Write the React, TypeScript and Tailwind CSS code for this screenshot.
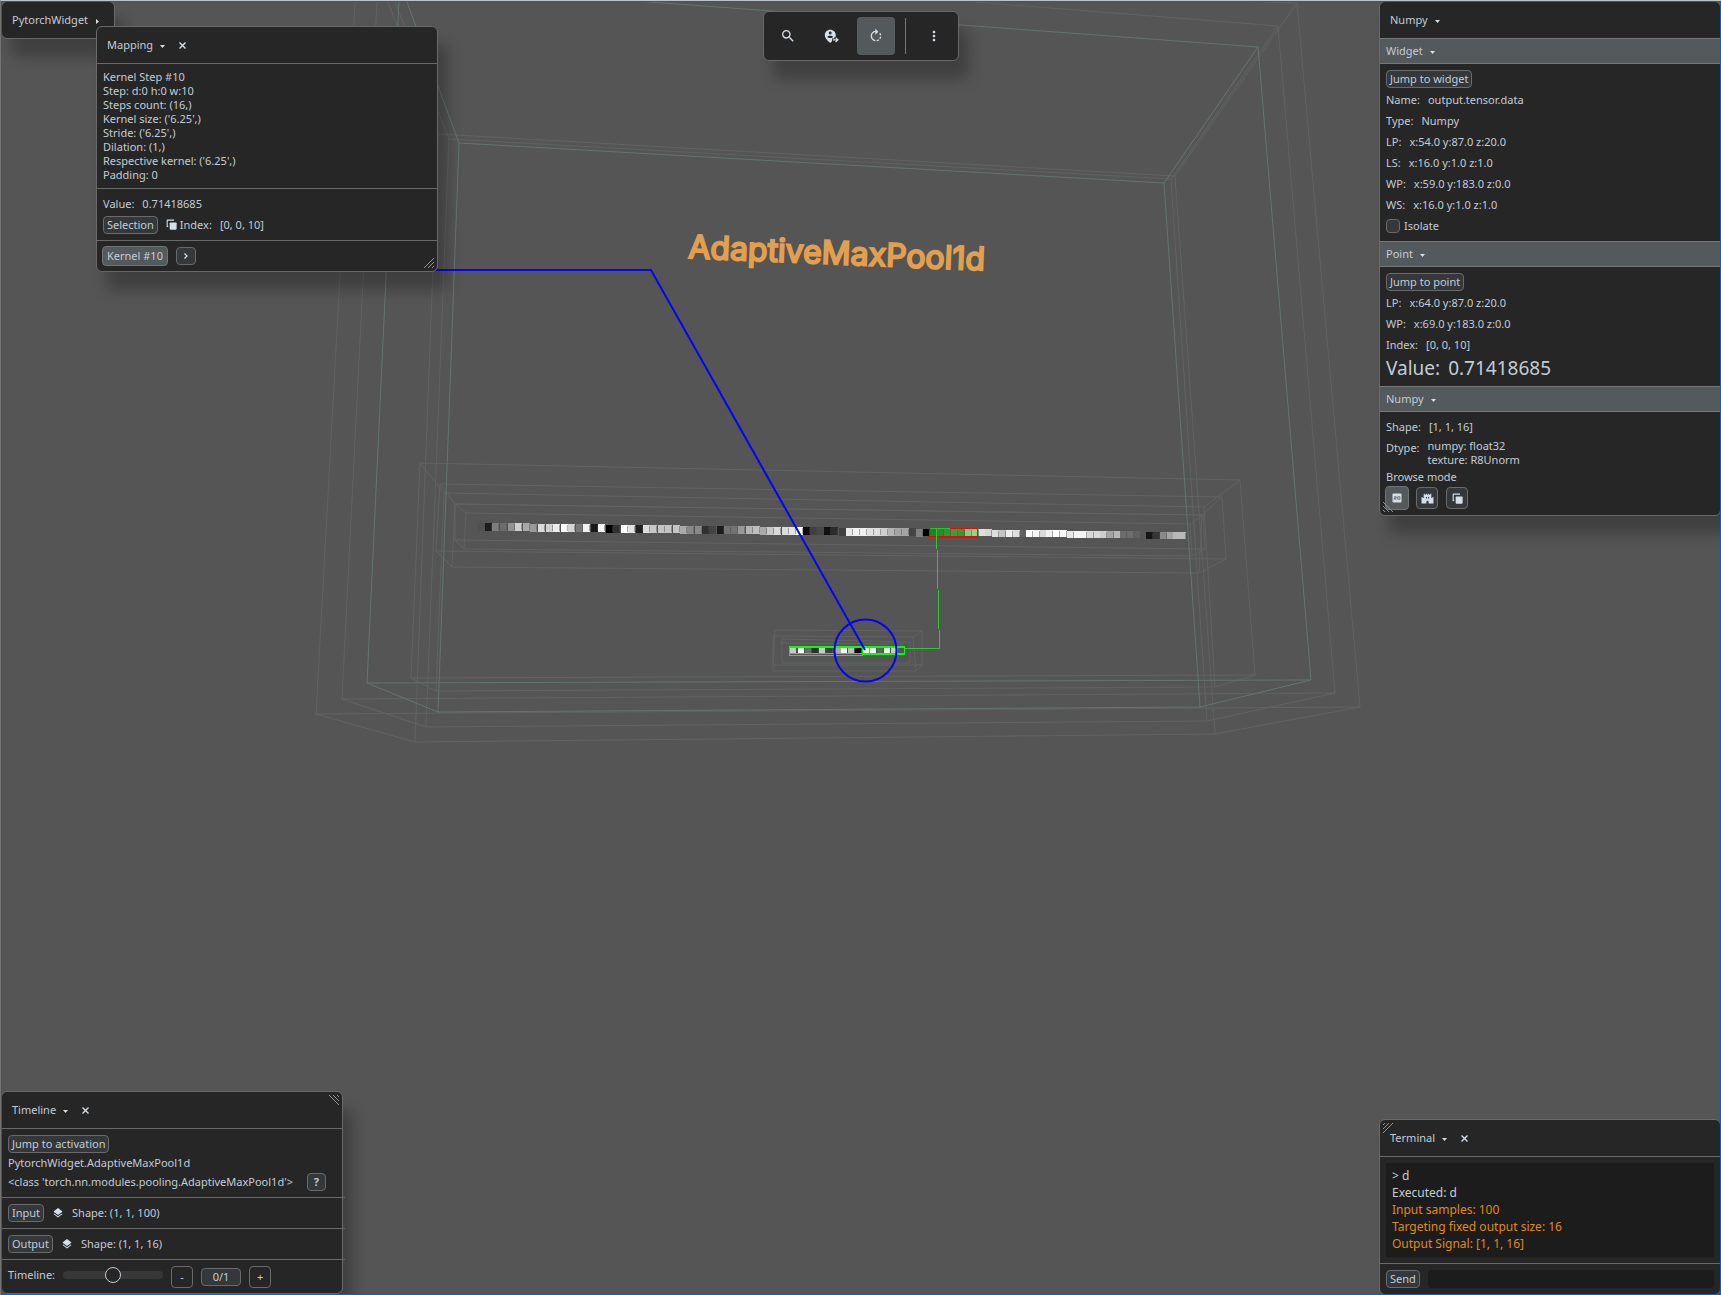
import React from "react";
import { MdCastle, MdLayers, MdMoreVert, MdRotateRight, MdSearch } from "react-icons/md";

type Cell = [number, string];

const inputCells: Cell[] = [
  [478, "#515151"], [485, "#1c1c1c"], [492, "#7d7d7d"], [500, "#6c6c6c"], [508, "#919191"], [515, "#cecece"],
  [523, "#a7a7a7"], [530, "#999999"], [538, "#dadada"], [546, "#d0d0d0"], [553, "#ebebeb"], [561, "#ffffff"],
  [568, "#d5d5d5"], [576, "#777777"], [583, "#f0f0f0"], [591, "#191919"], [598, "#f4f4f4"], [606, "#000000"],
  [613, "#303030"], [621, "#ffffff"], [628, "#e2e2e2"], [636, "#202020"], [643, "#dcdcdc"], [650, "#c8c8c8"],
  [658, "#c4c4c4"], [665, "#c4c4c4"], [673, "#c4c4c4"], [680, "#a9a9a9"], [687, "#888888"], [695, "#888888"],
  [702, "#303030"], [709, "#444444"], [717, "#1b1b1b"], [724, "#727272"], [731, "#727272"], [738, "#979797"],
  [746, "#b4b4b4"], [753, "#bfbfbf"], [760, "#a9a9a9"], [767, "#c8c8c8"], [774, "#dadada"], [782, "#dcdcdc"],
  [789, "#e4e4e4"], [796, "#ffffff"], [803, "#0e0e0e"], [810, "#404040"], [817, "#484848"], [824, "#111111"],
  [831, "#2c2c2c"], [839, "#404040"], [846, "#eaeaea"], [853, "#f3f3f3"], [860, "#efefef"], [867, "#e0e0e0"],
  [874, "#dedede"], [881, "#cfcfcf"], [888, "#b5b5b5"], [895, "#a5a5a5"], [902, "#a5a5a5"], [909, "#444444"],
  [916, "#808080"], [923, "#000000"], [930, "#1c8420"], [937, "#22902a"], [944, "#2a9a30"], [951, "#34a03a"],
  [958, "#2e9c34"], [965, "#7fd082"], [972, "#8ad88c"], [979, "#dfdfdf"], [985, "#d6d6d6"], [992, "#dedede"],
  [999, "#c4c4c4"], [1006, "#eeeeee"], [1013, "#dddddd"], [1020, "#626262"], [1026, "#ffffff"], [1033, "#f6f6f6"],
  [1040, "#dadada"], [1046, "#f1f1f1"], [1053, "#ffffff"], [1060, "#f8f8f8"], [1067, "#e6e6e6"], [1074, "#f3f3f3"],
  [1080, "#f3f3f3"], [1087, "#d8d8d8"], [1094, "#dadada"], [1100, "#cdcdcd"], [1107, "#a3a3a3"], [1114, "#b7b7b7"],
  [1120, "#6d6d6d"], [1127, "#6d6d6d"], [1134, "#606060"], [1140, "#565656"], [1146, "#151515"], [1153, "#353535"],
  [1160, "#8a8a8a"], [1167, "#a2a2a2"], [1173, "#b8b8b8"], [1179, "#b8b8b8"],
];

const outputCells: Cell[] = [
  [790, "#c8c8c8"], [798, "#ffffff"], [805, "#6b6b6b"], [812, "#303030"], [819, "#c8c8c8"], [826, "#404040"],
  [835, "#aaaaaa"], [841, "#f3f3f3"], [848, "#bdbdbd"], [855, "#000000"], [863, "#eeeeee"], [870, "#f3f3f3"],
  [877, "#606060"], [884, "#f0f0f0"], [891, "#cccccc"], [898, "#555555"],
];

const cellTop = (x: number) => Math.round(523 + ((x - 485) * 9) / 695);
const cellHeight = (x: number) => (x < 920 ? 8 : 7);

function Scene() {
  return (
    <svg
      className="absolute inset-0 h-full w-full"
      viewBox="0 0 1721 1295"
      preserveAspectRatio="xMinYMin slice"
      aria-label="AdaptiveMaxPool1d scene"
    >
      <g fill="none" stroke="#616262" strokeWidth="1">
        <path d="M355 2 L316 714 L1360 707 L1297 3 L1200 0 M316 714 L415 742 L1215 734 L1360 707 M1297 3 L1175 176 L438 134 L388 2 M438 134 L415 742 M1175 176 L1215 734" />
        <path d="M377 2 L342 699 L1335 693 L1278 26 L975 2 M342 699 L426 727 L1207 721 L1335 693 M1278 26 L1171 179 L449 139 L395 2 M449 139 L426 727 M1171 179 L1207 721" />
        <path d="M420 463 L1240 480 L1255 675 L411 678 Z M436 691 L1215 687 L1204 507 L444 493 Z M420 463 L444 493 M1240 480 L1204 507 M1255 675 L1215 687 M411 678 L436 691" />
        <path d="M440 484 L1222 497 L1226 559 L436 551 Z M455 504 L1202 515 L1199 573 L452 567 Z M440 484 L455 504 M1222 497 L1202 515 M1226 559 L1199 573 M436 551 L452 567" />
        <path d="M455 504 L1203 515 L1205 549 L455 540 Z M466 513 L1190 524 L1192 556 L464 549 Z M455 504 L466 513 M1203 515 L1190 524 M1205 549 L1192 556 M455 540 L464 549" />
        <path d="M775 630 L922 631 L922 665 L773 665 Z M773 636 L913 637 L916 671 L773 671 Z M922 631 L913 637 M922 665 L916 671 M782 639 L910 642 L910 663 L782 663 Z M780 643 L906 644" />
      </g>
      <g fill="none" stroke="#64756d" strokeWidth="1">
        <path d="M399 0 L367 683 L1311 680 L1258 47 L637 1" />
        <path d="M459 143 L1164 183 L1200 707 L438 712 Z" />
        <path d="M407 2 L459 143 M1258 47 L1164 183 M1311 680 L1200 707 M367 683 L438 712" />
      </g>

      <text
        x="688"
        y="258"
        transform="rotate(2.4 688 258)"
        fill="#e2a04f"
        stroke="#e2a04f"
        strokeWidth="2"
        fontSize="32"
        fontFamily="Inter, sans-serif"
      >
        AdaptiveMaxPool1d
      </text>

      <g shapeRendering="crispEdges">
        {inputCells.map(([x, color]) => (
          <g key={x}>
            <rect x={x} y={cellTop(x)} width="7" height={cellHeight(x)} fill={color} />
            <path d={`M${x + 6.5} ${cellTop(x) + 1}v6`} stroke="#4c4c4c" strokeOpacity="0.45" />
          </g>
        ))}
        <path d="M929.5 535.5 V528.5 H977.5 V537.5 H938.5 M928 536.5 H977" fill="none" stroke="#ff0000" />
        <path d="M930 528.5 H950" stroke="#2cc030" />
      </g>
      <path d="M936.5 529 L939.5 648.5 H905" fill="none" stroke="#34c434" shapeRendering="crispEdges" />

      <g shapeRendering="crispEdges">
        <rect x="790" y="648" width="108" height="5" fill="#4d4d4d" />
        {outputCells.map(([x, color]) => (
          <rect key={x} x={x} y="648" width="6" height="5" fill={color} />
        ))}
        <path d="M789 647 H905 M863 654 H905" stroke="#00ff00" strokeWidth="2" />
        <path d="M789.5 646 V656 M904.5 646 V655 M789 653.5 H863 M789 655.5 H863 M897.5 647 V654" stroke="#00ff00" />
        <path d="M862.5 646 V655 M869.5 646 V655" stroke="#00ff00" />
      </g>

      <path d="M436 270 H651 L865 650" fill="none" stroke="#0505f4" strokeWidth="2" />
      <circle cx="865.5" cy="650.5" r="31" fill="none" stroke="#0505f4" strokeWidth="2" />
    </svg>
  );
}

function Caret({ side = false }: { side?: boolean }) {
  return (
    <svg width="5" height="5" viewBox="0 0 5 5" className="mt-0.5 shrink-0 fill-[#d5dfea]" aria-hidden="true">
      <path d={side ? "M1 0 L4 2.5 L1 5Z" : "M0 1 H5 L2.5 4Z"} />
    </svg>
  );
}

function CopyIcon({ size }: { size: number }) {
  return (
    <svg width={size} height={size} viewBox="0 0 12 12" aria-hidden="true" className="shrink-0">
      <path d="M1.5 8.5 H1.3 V1.7 Q1.3 1.2 1.8 1.2 H8.2 V2" fill="none" stroke="#d5dfea" strokeWidth="1.2" />
      <path d="M1 8 H2.4" stroke="#d5dfea" strokeWidth="1.2" />
      <rect x="4" y="3.8" width="7.6" height="7.8" rx="0.9" fill="#d5dfea" />
    </svg>
  );
}

function PinMoveIcon() {
  return (
    <svg width="15" height="15" viewBox="0 0 15 15" aria-hidden="true">
      <path
        d="M6.2 0.8 C3 0.8 0.8 3.1 0.8 6 C0.8 9.2 3.6 11.6 6.2 14 L8 12.2 V9.4 H10.4 V8 H11.4 C11.7 7.4 11.8 6.5 11.8 6 C11.8 3.1 9.4 0.8 6.2 0.8Z"
        fill="#d5dfea"
      />
      <circle cx="6.2" cy="4" r="1.4" fill="#262626" />
      <path d="M3.4 8 C3.8 6.4 8.6 6.4 9 8 C8 9.3 4.4 9.3 3.4 8Z" fill="#262626" />
      <path d="M8.8 10.8 H13.6 M11.6 8.6 L14 10.8 L11.6 13" fill="none" stroke="#d5dfea" strokeWidth="1.2" />
    </svg>
  );
}

function NumberBoxIcon() {
  return (
    <svg width="10" height="10" viewBox="0 0 10 10" aria-hidden="true">
      <rect x="0.5" y="0.5" width="9" height="9" rx="1" fill="#d5dfea" />
      <path d="M2 3.8 H4.2 V5 H2.2 V6.2 H4.4 M5.7 3.8 H7.9 V6.2 H5.7Z" fill="none" stroke="#54595c" strokeWidth="0.8" />
    </svg>
  );
}

function Grip({ className }: { className: string }) {
  return (
    <svg width="12" height="12" viewBox="0 0 12 12" className={`absolute ${className}`} aria-hidden="true">
      <path d="M1 11 L11 1 M5 11 L11 5 M9 11 L11 9" stroke="#8d9299" strokeWidth="1" />
    </svg>
  );
}

function Panel({ className, label, children }: { className: string; label: string; children: React.ReactNode }) {
  return (
    <section
      aria-label={label}
      className={`absolute rounded-md border border-[#696969] bg-[#262626] shadow-[10px_18px_14px_rgba(0,0,0,0.25)] ${className}`}
    >
      {children}
    </section>
  );
}

function PanelHeader({ title, closable = false, side = false }: { title: string; closable?: boolean; side?: boolean }) {
  return (
    <header className="flex h-9 items-center pl-2.5">
      <button type="button" className="flex items-center gap-[7px]">
        {title}
        <Caret side={side} />
      </button>
      {closable && (
        <button type="button" aria-label={`Close ${title}`} className="ml-[13px] p-px">
          <svg width="7" height="7" viewBox="0 0 7 7" aria-hidden="true">
            <path d="M0.5 0.5 L6.5 6.5 M6.5 0.5 L0.5 6.5" stroke="#d5dfea" strokeWidth="1.4" />
          </svg>
        </button>
      )}
    </header>
  );
}

function SectionBar({ title }: { title: string }) {
  return (
    <button
      type="button"
      className="flex h-[26px] w-full items-center gap-[7px] border-y border-[#757878] bg-[#54595c] pl-1.5"
    >
      {title}
      <Caret />
    </button>
  );
}

function Btn({ children }: { children: React.ReactNode }) {
  return (
    <button
      type="button"
      className="flex h-[18px] items-center whitespace-nowrap rounded border border-[#6a6a6a] bg-[#34383a] px-[3px]"
    >
      {children}
    </button>
  );
}

function Row({ label, value }: { label: string; value: string }) {
  return (
    <div className="flex h-[21px] items-center gap-2">
      <span>{label}</span>
      <span>{value}</span>
    </div>
  );
}

const mappingLines = [
  "Kernel Step #10",
  "Step: d:0 h:0 w:10",
  "Steps count: (16,)",
  "Kernel size: ('6.25',)",
  "Stride: ('6.25',)",
  "Dilation: (1,)",
  "Respective kernel: ('6.25',)",
  "Padding: 0",
];

export default function App() {
  return (
    <main className="relative h-screen w-full overflow-hidden bg-[#555555] font-['Noto_Sans',sans-serif] text-[11px] leading-[14px] text-[#c3ccd6]">
      <Scene />

      <Panel label="PytorchWidget" className="left-px top-px w-[114px]">
        <PanelHeader title="PytorchWidget" side />
      </Panel>

      <Panel label="Mapping" className="left-24 top-[26px] w-[342px]">
        <PanelHeader title="Mapping" closable />
        <div className="border-t border-[#696969] px-1.5 py-1.5">
          {mappingLines.map((line) => (
            <p key={line}>{line}</p>
          ))}
        </div>
        <div className="border-t border-[#696969] px-1.5 pb-[5px] pt-1">
          <Row label="Value:" value="0.71418685" />
          <div className="flex h-[21px] items-center">
            <Btn>Selection</Btn>
            <span className="ml-2 mr-[3px]">
              <CopyIcon size={11} />
            </span>
            <Row label="Index:" value="[0, 0, 10]" />
          </div>
        </div>
        <div className="flex h-[31px] items-center gap-2 border-t border-[#696969] px-[5px]">
          <button type="button" className="h-5 rounded border border-[#6f7475] bg-[#54595c] px-1">
            Kernel #10
          </button>
          <button
            type="button"
            aria-label="Next kernel"
            className="flex h-[18px] w-5 items-center justify-center rounded border border-[#6a6a6a] bg-[#34383a]"
          >
            <svg width="4" height="6" viewBox="0 0 4 6" aria-hidden="true">
              <path d="M0.5 0.5 L3 3 L0.5 5.5" fill="none" stroke="#d5dfea" strokeWidth="1.2" />
            </svg>
          </button>
        </div>
        <Grip className="bottom-0.5 right-0.5" />
      </Panel>

      <nav
        aria-label="View tools"
        className="absolute left-1/2 top-[11px] flex h-[50px] w-[196px] -translate-x-1/2 items-center rounded-md border border-[#696969] bg-[#262626] pl-[5px] text-[#d5dfea] shadow-[10px_18px_14px_rgba(0,0,0,0.25)]"
      >
        <button type="button" aria-label="Search" className="flex size-[38px] items-center justify-center">
          <MdSearch size={16} />
        </button>
        <button type="button" aria-label="Move to location" className="ml-1.5 flex size-[38px] items-center justify-center">
          <PinMoveIcon />
        </button>
        <button
          type="button"
          aria-label="Rotate"
          className="ml-1.5 flex size-[38px] items-center justify-center rounded bg-[#54595c]"
        >
          <MdRotateRight size={16} />
        </button>
        <span className="ml-2.5 h-9 w-px bg-[#757878]" />
        <button type="button" aria-label="More" className="ml-[9px] flex size-[38px] items-center justify-center">
          <MdMoreVert size={16} />
        </button>
      </nav>

      <Panel label="Numpy" className="right-0 top-px w-[342px]">
        <PanelHeader title="Numpy" />
        <SectionBar title="Widget" />
        <div className="px-1.5 pb-[5px] pt-1">
          <div className="flex h-[21px] items-center">
            <Btn>Jump to widget</Btn>
          </div>
          <Row label="Name:" value="output.tensor.data" />
          <Row label="Type:" value="Numpy" />
          <Row label="LP:" value="x:54.0 y:87.0 z:20.0" />
          <Row label="LS:" value="x:16.0 y:1.0 z:1.0" />
          <Row label="WP:" value="x:59.0 y:183.0 z:0.0" />
          <Row label="WS:" value="x:16.0 y:1.0 z:1.0" />
          <label className="flex h-[21px] items-center gap-1">
            <input
              type="checkbox"
              className="size-3.5 appearance-none rounded-sm border border-[#6a6a6a] bg-[#34383a] checked:bg-[#8a9298]"
            />
            Isolate
          </label>
        </div>
        <SectionBar title="Point" />
        <div className="px-1.5 pb-1 pt-1">
          <div className="flex h-[21px] items-center">
            <Btn>Jump to point</Btn>
          </div>
          <Row label="LP:" value="x:64.0 y:87.0 z:20.0" />
          <Row label="WP:" value="x:69.0 y:183.0 z:0.0" />
          <Row label="Index:" value="[0, 0, 10]" />
          <div className="flex h-[27px] items-center gap-2 text-[19px] leading-[27px]">
            <span>Value:</span>
            <span>0.71418685</span>
          </div>
        </div>
        <SectionBar title="Numpy" />
        <div className="px-1.5 pb-[5px] pt-1">
          <Row label="Shape:" value="[1, 1, 16]" />
          <div className="flex gap-2 pb-px">
            <span className="leading-[21px]">Dtype:</span>
            <span className="pt-0.5">
              numpy: float32
              <br />
              texture: R8Unorm
            </span>
          </div>
          <p className="leading-[18px]">Browse mode</p>
          <div className="-ml-px flex h-6 items-center gap-[7px]">
            <button
              type="button"
              aria-label="Browse values"
              className="flex size-6 items-center justify-center rounded border border-[#6f7475] bg-[#54595c]"
            >
              <NumberBoxIcon />
            </button>
            <button
              type="button"
              aria-label="Browse blocks"
              className="flex size-[22px] items-center justify-center rounded border border-[#6a6a6a] bg-[#34383a] text-[#d5dfea]"
            >
              <MdCastle size={13} />
            </button>
            <button
              type="button"
              aria-label="Browse slices"
              className="ml-px flex size-[22px] items-center justify-center rounded border border-[#6a6a6a] bg-[#34383a]"
            >
              <CopyIcon size={11} />
            </button>
          </div>
        </div>
        <Grip className="bottom-0.5 left-0.5 -scale-x-100" />
      </Panel>

      <Panel label="Timeline" className="bottom-px left-px w-[342px]">
        <PanelHeader title="Timeline" closable />
        <div className="border-t border-[#696969] px-1.5 pb-1.5 pt-[5px]">
          <div className="flex h-[19px] items-center">
            <Btn>Jump to activation</Btn>
          </div>
          <p className="leading-[19px]">PytorchWidget.AdaptiveMaxPool1d</p>
          <div className="flex h-[19px] items-center gap-3.5 whitespace-nowrap">
            &lt;class 'torch.nn.modules.pooling.AdaptiveMaxPool1d'&gt;
            <button
              type="button"
              className="flex h-[18px] w-[19px] items-center justify-center rounded border border-[#6a6a6a] bg-[#34383a] font-bold"
            >
              ?
            </button>
          </div>
        </div>
        <div className="-mr-[3px] flex h-[31px] items-center gap-2 border-t border-[#696969] px-1.5">
          <Btn>Input</Btn>
          <MdLayers size={12} className="text-[#d5dfea]" />
          <span>Shape: (1, 1, 100)</span>
        </div>
        <div className="-mr-[3px] flex h-[31px] items-center gap-2 border-t border-[#696969] px-1.5">
          <Btn>Output</Btn>
          <MdLayers size={12} className="text-[#d5dfea]" />
          <span>Shape: (1, 1, 16)</span>
        </div>
        <div className="-mr-[3px] flex h-[34px] items-center border-t border-[#696969] px-1.5">
          <label htmlFor="timeline" className="pb-1">
            Timeline:
          </label>
          <input
            id="timeline"
            type="range"
            defaultValue={50}
            className="mb-[3px] ml-2 mr-2 h-2 w-[100px] appearance-none rounded bg-[#373737] [&::-webkit-slider-thumb]:size-4 [&::-webkit-slider-thumb]:appearance-none [&::-webkit-slider-thumb]:rounded-full [&::-webkit-slider-thumb]:border [&::-webkit-slider-thumb]:border-[#c3ccd6] [&::-webkit-slider-thumb]:bg-[#262626]"
          />
          <button type="button" className="size-[22px] rounded border border-[#6a6a6a]">
            -
          </button>
          <button type="button" className="mx-2 h-[18px] w-10 rounded-sm border border-[#6a6a6a] bg-[#34383a] leading-4">
            0/1
          </button>
          <button type="button" className="size-[22px] rounded border border-[#6a6a6a]">
            +
          </button>
        </div>
        <Grip className="right-0.5 top-0.5 -scale-y-100" />
      </Panel>

      <Panel label="Terminal" className="bottom-0 right-0 w-[342px]">
        <PanelHeader title="Terminal" closable />
        <div className="border-t border-[#696969] p-1.5">
          <div className="bg-[#1c1c1c] px-1.5 pb-[5px] pt-1 text-[12px] leading-[17px] text-[#e08a10]">
            <p className="text-[#c3ccd6]">&gt; d</p>
            <p className="text-[#c3ccd6]">Executed: d</p>
            <p>Input samples: 100</p>
            <p>Targeting fixed output size: 16</p>
            <p>Output Signal: [1, 1, 16]</p>
          </div>
        </div>
        <form
          className="flex h-[31px] items-center gap-2 border-t border-[#696969] px-1.5"
          onSubmit={(e) => e.preventDefault()}
        >
          <Btn>Send</Btn>
          <input
            type="text"
            aria-label="Command"
            className="h-[18px] min-w-0 flex-1 rounded-sm bg-[#1c1c1c] px-1 outline-none"
          />
        </form>
        <Grip className="left-0.5 top-0.5 -scale-100" />
      </Panel>

      <div className="pointer-events-none absolute inset-0 border-l border-t border-l-[#747474] border-t-[#bcc3c8]">
        <div className="h-full border border-[#1b5cb2]" />
      </div>
    </main>
  );
}
